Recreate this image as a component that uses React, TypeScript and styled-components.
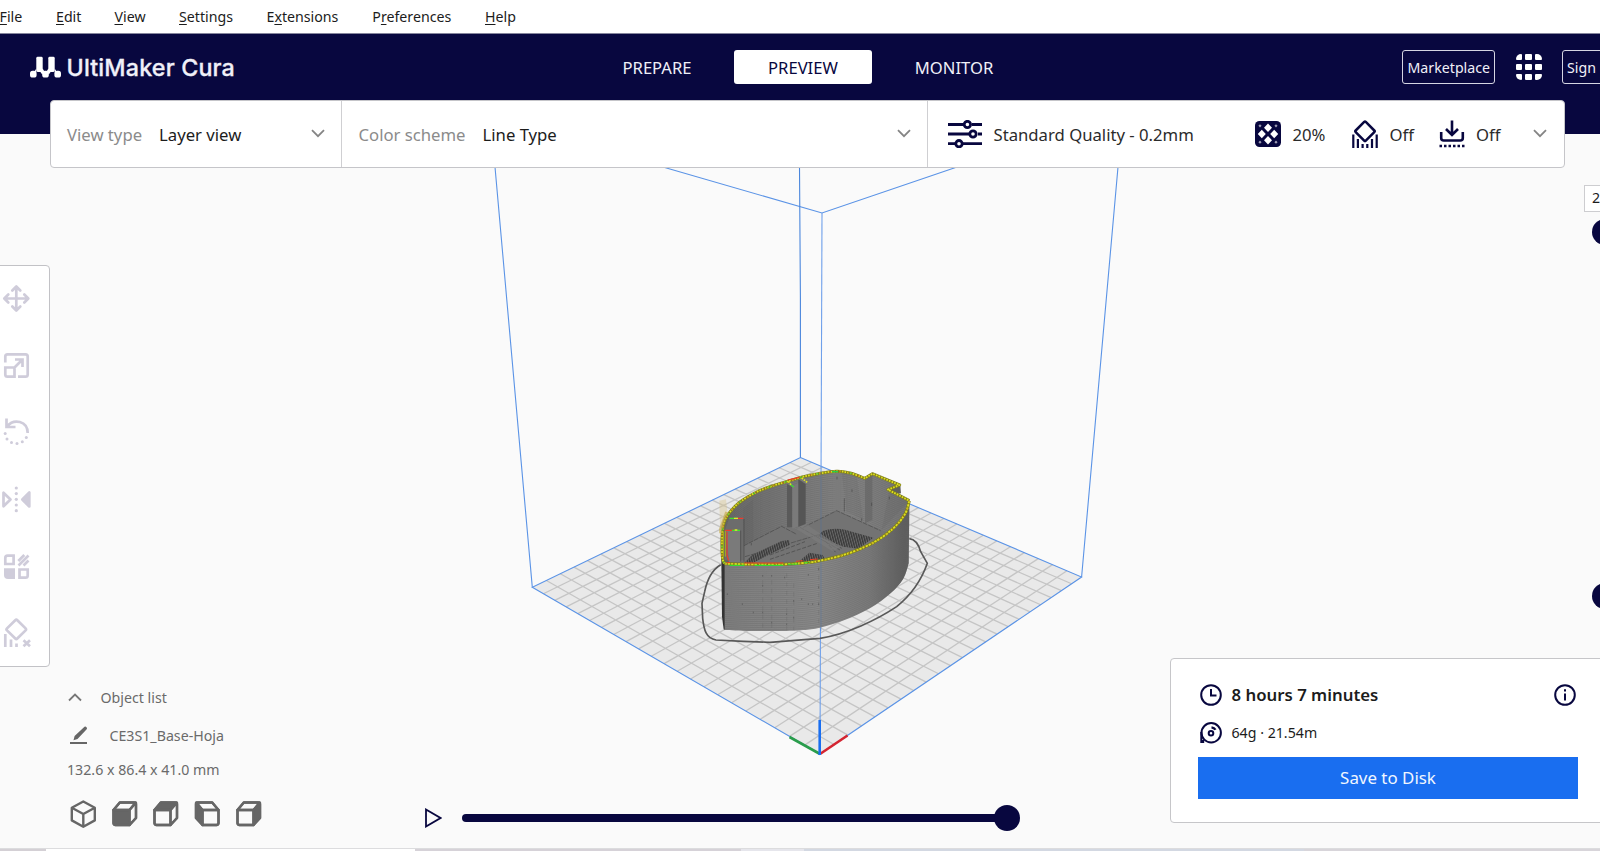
import React from "react";
import styled, { createGlobalStyle, css } from "styled-components";

const navy = "#08073f";
const muted = "#cfccda";
const steel = "#666666";

const GlobalStyle = createGlobalStyle`
  body { margin: 0; background: #fafafa; }
  * { box-sizing: border-box; }
  svg { display: block; flex: none; }
`;

const Window = styled.div`
  width: 1600px;
  height: 851px;
  overflow: hidden;
  display: flex;
  flex-direction: column;
  font-family: "Noto Sans", "Open Sans", sans-serif;
  font-size: 14.2px;
  color: #1c1c1c;
  white-space: nowrap;
`;

const MenuBar = styled.nav`
  flex: none;
  height: 34px;
  margin-left: -0.5px;
  display: grid;
  grid-template-columns: 56.5px 58.5px 64.5px 87.5px 105.8px 112.7px auto;
  align-items: center;
  background: #fff;
  border-bottom: 1px solid #85859c;
`;

const MenuItem = styled.span`
  u {
    text-underline-offset: 2px;
    text-decoration-thickness: 1px;
    text-decoration-skip-ink: none;
  }
`;

const Header = styled.header`
  flex: none;
  height: 100px;
  padding: 16px 0 0 30px;
  display: flex;
  align-items: flex-start;
  background: ${navy};
  color: #f0f0f8;
`;

const Brand = styled.div`
  flex: none;
  width: 560px;
  height: 34px;
  display: flex;
  align-items: center;
  gap: 5.5px;
  font: 500 23.3px/34px Inter, sans-serif;
  letter-spacing: 0.15px;
`;

const BrandName = styled.span`
  padding-top: 2px;
  -webkit-text-stroke: 0.3px currentColor;
`;

const Stages = styled.div`
  flex: none;
  width: 812px;
  display: flex;
  font-size: 16.6px;
`;

const Stage = styled.span<{ $active?: boolean; $width: number }>`
  flex: none;
  width: ${(p) => p.$width}px;
  height: 34px;
  display: flex;
  align-items: center;
  justify-content: center;
  border-radius: 3px;
  ${(p) =>
    p.$active &&
    css`
      margin-left: 10px;
      background: #fff;
      color: ${navy};
    `}
`;

const OutlineButton = styled.button<{ $width: number; $gap?: number }>`
  flex: none;
  width: ${(p) => p.$width}px;
  height: 34px;
  margin-right: ${(p) => p.$gap ?? 0}px;
  padding: 0 0 0 4.5px;
  border: 1.5px solid #d5d5e2;
  border-radius: 3px;
  background: none;
  color: inherit;
  font: inherit;
  text-align: left;
`;

const AppGrid = styled.div`
  flex: none;
  width: 26px;
  height: 26px;
  margin: 4px 20px 0 0;
  display: grid;
  grid-template-columns: repeat(3, 1fr);
  gap: 3.5px;
  overflow: hidden;
  border-radius: 5px;
  i { background: #fff; border-radius: 1px; }
`;

const Workspace = styled.main`
  position: relative;
  flex: none;
  height: 714px;
  display: flex;
  flex-direction: column;
  background: #fafafa;
`;

const SceneLayer = styled.svg`
  position: absolute;
  inset: 0;
`;

const ConfigBar = styled.section`
  position: relative;
  flex: none;
  width: 1515px;
  height: 68px;
  margin: -34px 0 0 50px;
  display: flex;
  background: #fff;
  border: 1px solid #c5c5c9;
  border-radius: 4px;
  font-size: 16.7px;
`;

const ConfigCell = styled.div<{ $width: number; $pad: number }>`
  flex: none;
  width: ${(p) => p.$width}px;
  padding: 0 0 0 ${(p) => p.$pad}px;
  display: flex;
  align-items: center;
  border-right: 1px solid #cfcfd2;
  &:last-child { border-right: 0; }
`;

const Label = styled.span`
  color: #8b8b8b;
  margin-right: 17px;
`;

const Push = styled.span<{ $right: number }>`
  margin: -2px ${(p) => p.$right}px 0 auto;
`;

const Setting = styled.div<{ $width: number }>`
  flex: none;
  width: ${(p) => p.$width}px;
  display: flex;
  align-items: center;
  gap: 11.5px;
  color: #2b2b2b;
`;

const Body = styled.div`
  position: relative;
  flex: 1;
  min-height: 0;
  display: grid;
  grid-template-columns: 425px 745px 434px;
`;

const LeftColumn = styled.div`
  padding-top: 97px;
`;

const ToolPanel = styled.div`
  width: 54px;
  height: 402px;
  margin-left: -4px;
  padding: 15.5px 0 0 3px;
  display: flex;
  flex-direction: column;
  gap: 35px;
  background: #fff;
  border: 1px solid #c2c2c6;
  border-radius: 4px;
`;

const ObjectPanel = styled.div`
  padding: 12px 0 0 67px;
  color: #6a6a6a;
`;

const InfoRow = styled.div<{ $height: number; $gap?: number; $pad?: number }>`
  height: ${(p) => p.$height}px;
  padding-left: ${(p) => p.$pad ?? 0}px;
  display: flex;
  align-items: center;
  gap: ${(p) => p.$gap ?? 0}px;
`;

const CenterColumn = styled.div`
  padding-bottom: 17px;
  display: flex;
  align-items: flex-end;
`;

const PathSlider = styled.div`
  height: 26px;
  display: flex;
  align-items: center;
`;

const Track = styled.div`
  width: 540px;
  height: 8px;
  margin-left: 20px;
  border-radius: 4px;
  background: ${navy};
`;

const Handle = styled.div<{ $overlap?: number }>`
  flex: none;
  width: 26px;
  height: 26px;
  margin-left: ${(p) => p.$overlap ?? 0}px;
  border-radius: 50%;
  background: ${navy};
`;

const RightColumn = styled.div`
  display: flex;
  flex-direction: column;
`;

const LayerSlider = styled.div`
  height: 490px;
  padding: 17px 0 0 414px;
  display: flex;
  flex-direction: column;
`;

const LayerLabel = styled.div`
  flex: none;
  width: 50px;
  height: 27px;
  padding-left: 7px;
  border: 1px solid #cdcdd0;
  background: #fff;
  line-height: 24px;
`;

const LayerTrack = styled.div`
  height: 390px;
  margin: 6.5px 0 0 8px;
  display: flex;
  flex-direction: column;
  justify-content: space-between;
`;

const PrintPanel = styled.section`
  height: 165px;
  padding: 17px 26px 0 28.5px;
  background: #fff;
  border: 1.5px solid #c6c6c9;
  border-radius: 4px;
`;

const PrintRow = styled.div<{ $strong?: boolean }>`
  height: ${(p) => (p.$strong ? 38 : 37)}px;
  display: flex;
  align-items: center;
  gap: 10px;
  ${(p) => p.$strong && "font-size: 16.8px; font-weight: 600;"}
`;

const PrintText = styled.span`
  margin-top: -1px;
`;

const SaveButton = styled.button`
  width: 380px;
  height: 42px;
  margin: 6px 0 0 -1.5px;
  padding: 0 0 2px;
  border: 0;
  background: #196ef0;
  color: #f0f6ff;
  font: 16.9px "Noto Sans", sans-serif;
`;

const Spring = styled.span<{ $end: number }>`
  margin-left: auto;
  padding-right: ${(p) => p.$end}px;
`;

const Taskbar = styled.footer`
  flex: none;
  height: 3px;
  display: flex;
  border-top: 1px solid #dcdcde;
`;

const TaskSegment = styled.div<{ $width: number; $tone: string }>`
  width: ${(p) => p.$width}px;
  background: ${(p) => p.$tone};
`;

/* ---------- icons ---------- */

const Chevron = ({ up }: { up?: boolean }) => (
  <svg width="14" height="9" viewBox="0 0 14 9" fill="none" stroke={up ? "#777" : "#858585"} strokeWidth="1.8">
    <path d={up ? "M1 7.5 7 1.5l6 6" : "M1 1.2 7 7.2l6-6"} />
  </svg>
);

const Logo = () => (
  <svg width="31" height="22" viewBox="0 0 31 22" fill="#fff">
    <rect x="0" y="14.8" width="6.6" height="6.8" rx="2.6" />
    <rect x="12.2" y="14.8" width="6.6" height="6.8" rx="2.6" />
    <rect x="24.400" y="14.8" width="6.6" height="6.8" rx="2.6" />
    <rect x="6.300" y="0.800" width="6.400" height="15.200" rx="1.400" />
    <rect x="18.300" y="0.800" width="6.400" height="15.200" rx="1.400" />
    <path d="M6.300 12.500V16L5 17 4.500 15.500zM12.700 12.500l1.500 2.800-2 3.200-2-2.700zM18.300 12.500l-1.500 2.800 2 3.200 2-2.700zM24.700 12.500V16L26 17l.5-1.500z" />
  </svg>
);

const SlidersIcon = () => (
  <svg width="34" height="28" viewBox="0 0 34 28" fill="none" stroke={navy} strokeWidth="2.8">
    <path d="M0 4.5h16M24 4.5h10M0 14h21M30 14h4M0 23.7h7M15 23.7h19" />
    <circle cx="19.4" cy="4.5" r="3.2" />
    <circle cx="25" cy="14" r="3.2" />
    <circle cx="11" cy="23.7" r="3.2" />
  </svg>
);

const InfillIcon = () => (
  <svg width="26" height="26" viewBox="0 0 26 26">
    <rect width="26" height="26" rx="4.5" fill={navy} />
    <g fill="#fff">
      <path d="M13 2.5 17 6.7 13 11 9 6.700zM13 15l4 4.300-4 4.200-4-4.200zM6.800 8.800l4 4.200-4 4.200-4-4.200zM19.200 8.800l4 4.200-4 4.200-4-4.200z" />
      <path d="M5 3.200l1.600 1.600L5 6.400 3.400 4.800zM21 3.200l1.600 1.600L21 6.400l-1.600-1.600zM5 19.600l1.600 1.600L5 22.800l-1.600-1.600zM21 19.600l1.600 1.600-1.600 1.600-1.600-1.600z" opacity=".6" />
    </g>
  </svg>
);

const SupportIcon = () => (
  <svg width="26" height="28" viewBox="0 0 26 28" fill="none" stroke={navy} strokeWidth="2.5">
    <path d="M12.200 1.900q.8-.8 1.600 0l8.500 8.600q.8.8 0 1.600l-8.500 8.500q-.8.8-1.600 0L3.700 12.100q-.8-.8 0-1.600z" />
    <path d="M1.300 14.500V28M5.900 19V28M10.600 24V28M15.300 24V28M20 19V28M24.700 14.500V28" strokeWidth="2.200" />
  </svg>
);

const AdhesionIcon = () => (
  <svg width="26" height="28" viewBox="0 0 26 28" fill="none" stroke={navy} strokeWidth="2.6">
    <path d="M13 .5v14M7 9l6 6 6-6M2.200 12v6q0 2.500 2.500 2.500h16.600q2.500 0 2.500-2.500v-6" />
    <path d="M.5 26h25" strokeDasharray="2.500 2" strokeWidth="2.500" />
  </svg>
);

const toolProps = {
  width: 32,
  height: 32,
  viewBox: "0 0 32 32",
  fill: "none",
  stroke: muted,
  strokeWidth: 2.7,
} as const;

const MoveIcon = () => (
  <svg {...toolProps} strokeLinecap="round" strokeLinejoin="round">
    <path d="M16.300 5v23M4.800 16.500h23M12.300 8.500l4-4 4 4M12.300 24.500l4 4 4-4M8.300 12.500l-4 4 4 4M24.300 12.500l4 4-4 4" />
  </svg>
);

const ScaleIcon = () => (
  <svg {...toolProps}>
    <path d="M5.300 13.500V7.500q0-2.200 2.200-2.200h18q2.200 0 2.200 2.200v18q0 2.200-2.200 2.200H18M5.300 18.500h9.200v9.200H7.500q-2.200 0-2.200-2.200zM14.500 18.500l8-8M15 10.500h7.500V18" />
  </svg>
);

const RotateIcon = () => (
  <svg {...toolProps}>
    <path d="M6.500 2.500v8.500h9M7 10.500C14 2 27.500 5 27.700 17" />
    <g fill={muted} stroke="none">
      <circle cx="5.200" cy="17.500" r="1.500" />
      <circle cx="7" cy="23" r="1.500" />
      <circle cx="11.500" cy="26.500" r="1.500" />
      <circle cx="17" cy="27.500" r="1.500" />
      <circle cx="22.300" cy="25.800" r="1.500" />
      <circle cx="26.300" cy="21.600" r="1.500" />
    </g>
  </svg>
);

const MirrorIcon = () => (
  <svg {...toolProps} strokeLinejoin="round">
    <path d="M3.500 9.700v13.600l7-6.800z" />
    <path d="M29.300 9.500v14l-7-7z" fill={muted} />
    <g fill={muted} stroke="none">
      {[5, 10.6, 16.3, 22, 27.7].map((y) => (
        <circle key={y} cx="16.300" cy={y} r="1.600" />
      ))}
    </g>
  </svg>
);

const MeshIcon = () => (
  <svg {...toolProps}>
    <path d="M5.300 14V8q0-2.300 2.300-2.300h6V14zM19.500 19.500h8.200v6q0 2.200-2.200 2.200h-6z" />
    <path d="M4 18.200h11V29H8q-4 0-4-4z" fill={muted} stroke="none" />
    <path d="M18.300 11l6-6M18.500 15.500 28.500 5.500M23.500 15.500l5-5" />
  </svg>
);

const BlockerIcon = () => (
  <svg {...toolProps}>
    <path d="M15.300 3.200q1-1 2 0l8.300 8.200q1 1 0 2l-8.300 8.100q-1 1-2 0L7 13.400q-1-1 0-2z" />
    <path d="M5.300 17v13M11 22.500v7.500M16.500 26.500v3.500M23.500 23.200l6.500 6M30 23.200l-6.500 6" />
  </svg>
);

const PencilIcon = () => (
  <svg width="19" height="19" viewBox="0 0 19 19" fill={steel}>
    <path d="M15.500.8q1-.7 2 .4t.2 2L8.500 13l-4 1.200L5.600 10zM1 16h17v2H1z" />
  </svg>
);

type Face = "front" | "top" | "left" | "right";

const CubeIcon = () => (
  <svg width="28" height="30" viewBox="0.7 0 28 30" fill="none" stroke={steel} strokeWidth="2.400" strokeLinejoin="round">
    <path d="M14 2.500 25.500 8.800v12.600L14 27.800 2.500 21.400V8.800zM2.500 8.800 14 15l11.500-6.200M14 15v12.800" />
  </svg>
);

const FaceIcon = ({ face }: { face: Face }) => (
  <svg width="28" height="30" viewBox="0 0 28 30" fill="none" stroke={steel} strokeWidth="2.400" strokeLinejoin="round">
    <g transform={face === "left" ? "matrix(-1 0 0 1 28 0)" : undefined}>
      <path d="M2.500 11 8.800 3.500H23q2 0 2 2v13.500l-6.500 7H4.500q-2 0-2-2z" />
      <path d="M2.500 11h16v15h-14q-2 0-2-2z" fill={face === "front" ? steel : "none"} />
      <path d="M2.500 11 8.800 3.500h15.700l-6 7.500z" fill={face === "top" ? steel : "none"} />
      <path d="M18.500 11 25 3.800V19l-6.500 7z" fill={face === "left" || face === "right" ? steel : "none"} />
    </g>
  </svg>
);

const ClockIcon = () => (
  <svg width="22" height="22" viewBox="0 0 22 22" fill="none" stroke={navy} strokeWidth="2">
    <circle cx="11" cy="11" r="9.800" />
    <path d="M11 5v6.500h5.500" />
  </svg>
);

const SpoolIcon = () => (
  <svg width="22" height="22" viewBox="0 0 22 22" fill="none" stroke={navy} strokeWidth="2">
    <circle cx="11.200" cy="10.800" r="9.700" />
    <path d="M1.300 10v11M3.200 18v3" />
    <circle cx="11" cy="11.200" r="2.300" />
    <path d="M11.500 5.300q2.800.4 4 2.500" strokeWidth="2.300" />
  </svg>
);

const InfoIcon = () => (
  <svg width="22" height="22" viewBox="0 0 22 22" fill="none" stroke={navy} strokeWidth="2">
    <circle cx="11" cy="11" r="9.800" />
    <path d="M11 9.500v7M11 5.300v2.300" />
  </svg>
);

/* ---------- build plate and sliced model ---------- */

type Point = [number, number];

const back: Point = [800.4, 457.5];
const left: Point = [532.3, 587.3];
const right: Point = [1081.6, 577];
const front: Point = [820, 754];

/* Perspective map of the unit square onto the plate; (0,0) is the front corner. */
const onPlate = (u: number, v: number): Point => {
  const [x0, y0] = front;
  const [x1, y1] = right;
  const [x2, y2] = back;
  const [x3, y3] = left;
  const dx1 = x1 - x2, dx2 = x3 - x2, sx = x0 - x1 + x2 - x3;
  const dy1 = y1 - y2, dy2 = y3 - y2, sy = y0 - y1 + y2 - y3;
  const den = dx1 * dy2 - dx2 * dy1;
  const g = (sx * dy2 - dx2 * sy) / den;
  const h = (dx1 * sy - sx * dy1) / den;
  const w = g * u + h * v + 1;
  return [
    ((x1 - x0 + g * x1) * u + (x3 - x0 + h * x3) * v + x0) / w,
    ((y1 - y0 + g * y1) * u + (y3 - y0 + h * y3) * v + y0) / w,
  ];
};

const segment = (a: Point, b: Point) => `M${a[0].toFixed(2)} ${a[1].toFixed(2)}L${b[0].toFixed(2)} ${b[1].toFixed(2)}`;

const CELLS = 22;
const gridPath = Array.from({ length: CELLS - 1 }, (_, i) => (i + 1) / CELLS)
  .map((t) => segment(onPlate(t, 0), onPlate(t, 1)) + segment(onPlate(0, t), onPlate(1, t)))
  .join("");

const smooth = (pts: Point[]) => {
  let d = `M${pts[0][0]} ${pts[0][1]}`;
  for (let i = 0; i < pts.length - 1; i++) {
    const p0 = pts[i - 1] ?? pts[i];
    const p1 = pts[i];
    const p2 = pts[i + 1];
    const p3 = pts[i + 2] ?? p2;
    const c = [
      p1[0] + (p2[0] - p0[0]) / 6, p1[1] + (p2[1] - p0[1]) / 6,
      p2[0] - (p3[0] - p1[0]) / 6, p2[1] - (p3[1] - p1[1]) / 6,
      p2[0], p2[1],
    ].map((n) => n.toFixed(1));
    d += `C${c.join(" ")}`;
  }
  return d;
};

const wallTop: Point[] = [[104, 371], [180, 373], [280, 373], [340, 369], [390, 362], [470, 342], [550, 308], [610, 265], [645, 222], [658, 182]];
const wallBottom: Point[] = [[104, 570], [180, 573], [280, 573], [340, 570], [390, 563], [462, 541], [540, 505], [602, 460], [640, 416], [656, 370]];

const wallLayer = (t: number) =>
  smooth(wallTop.map((p, i): Point => [p[0] + (wallBottom[i][0] - p[0]) * t, p[1] + (wallBottom[i][1] - p[1]) * t]));

const backRim: Point[] = [[104, 371], [97, 350], [97, 275], [104, 242], [120, 216], [150, 186], [200, 156], [250, 137], [300, 122], [340, 110], [385, 101], [440, 94], [480, 99], [525, 115]];
const backRimPath = smooth(backRim);
const notch = "L547 101L629 135L594 149L658 182";
const frontRimPath = smooth(wallTop);
const wallReturn = smooth([...wallTop].reverse()).replace("M", "L");

const outerWall = `${frontRimPath}L656 370${smooth([...wallBottom].reverse()).replace("M", "L")}Z`;
const interior = `${backRimPath}${notch}${wallReturn}Z`;

const layers = Array.from({ length: 33 }, (_, i) => wallLayer((i + 0.7) / 33.5)).join("");
const innerLayers = Array.from({ length: 40 }, (_, i) => {
  const y = 8 + i * 6;
  return smooth(backRim.slice(3).map((p): Point => [p[0], p[1] + y])) + `L547 ${101 + y}L660 ${150 + y}`;
}).join("");

const seams: Point[] = [
  [218, 405], [245, 405], [284, 410], [355, 402], [386, 385], [157, 490], [190, 515], [218, 515], [245, 545], [290, 520],
  [311, 480], [355, 490], [386, 440], [368, 490], [112, 460], [290, 550], [335, 475], [386, 490], [311, 530], [218, 435],
];

const Model = () => (
  <g transform="translate(690 440) scale(.33333)" fill="none" strokeLinejoin="round">
    <path
      d="M92 374C62 392 50 425 44 455L36 490L38 535C42 570 48 595 78 600L160 604L240 607L390 595C470 583 560 540 620 500C670 460 698 410 712 370L692 335C685 310 675 298 658 296"
      stroke="#585858" strokeWidth="5"
    />
    <path d="M88 182L108 178L113 218L98 262L90 262Z" fill="#d8c48a" opacity=".4" />
    <path d="M592 149L631 136L633 160L618 163Z" fill="#606060" />
    <path d="M93 270L106 372L106 570L101 568L96 530Z" fill="#333" />
    <path d={interior} fill="url(#inner)" />
    <g clipPath="url(#cavity)">
      <path d={innerLayers} stroke="#505050" strokeWidth="1.500" opacity=".4" />
      <path d="M160 318L275 259L330 270L440 212L572 272L640 290L500 400L100 400Z" fill="#737373" />
      <path d="M160 318L275 259L320 283M340 262L440 212L572 272M330 262L450 330M165 350L400 280" stroke="#484848" strokeWidth="2" strokeDasharray="15 3" />
      <path d="M186 345L275 303L297 300L300 314L235 345L190 368L160 372Z" fill="url(#hatch)" />
      <path d="M320 370L358 338L398 345L405 358Z" fill="url(#hatch)" />
      <path d="M384 289L398 273Q430 262 465 269L550 293L505 326L460 320Z" fill="url(#hatch)" />
      <path d="M240 358L385 309M240 345L345 305M405 303L440 340M420 305L455 325" stroke="#454545" strokeWidth="2" strokeDasharray="12 5" />
      <path d="M320 268L345 250L450 320L430 335Z" fill="#7c7c7c" opacity=".65" />
      <path d="M291 132L307 142V262H291Z" fill="#5a5a5a" />
      <path d="M307 140L326 128V258L307 266Z" fill="#7a7a7a" />
      <path d="M325 118L347 132V252L325 260Z" fill="#555" />
      <path d="M525 115L547 101V240L525 250Z" fill="#626262" opacity=".6" />
      <path d="M188 180L160 205V315L190 300ZM455 98L500 108L520 240L470 215ZM598 150L655 185L575 270Z" fill="#505050" opacity=".12" />
      <path d="M118 235H160L162 360H105V270Z" fill="#6c6c6c" />
      <path d="M109 272H150V366H117Z" fill="#7a7a7a" />
      <path d="M152 272V365M162 237V365" stroke="#484848" strokeWidth="2" />
      <path d="M463 175V215M486 148V156M545 188V198M515 235V243M184 309V316M441 110V118M598 170V178" stroke="#383838" strokeWidth="1.500" />
    </g>
    <path d={outerWall} fill="url(#outer)" />
    <path d={layers} stroke="#666" strokeWidth="2" opacity=".5" />
    <path d={seams.map(([x, y]) => `M${x} ${y}v5`).join("")} stroke="#444" strokeWidth="1.500" />
    <path d="M218 420V570M245 420V570M290 400V572M311 430V570M386 380V560" stroke="#4d4d4d" strokeWidth="1" strokeDasharray="14 12" opacity=".45" />

    <path d={`${backRimPath}${notch}`} stroke="#7e7e1c" strokeWidth="9" />
    <path d={frontRimPath} stroke="#7e7e1c" strokeWidth="9" />
    <path d={`${backRimPath}${notch}`} stroke="#dede1e" strokeWidth="5.500" strokeDasharray="5 3.500" />
    <path d={frontRimPath} stroke="#dede1e" strokeWidth="5.500" strokeDasharray="7 3" />
    <path d="M106 272V350M100 275V350" stroke="#a8b41a" strokeWidth="3" />
    <path d={backRimPath} stroke="#bb5b1c" strokeWidth="3" strokeDasharray="5 24" strokeDashoffset="4" />
    <path d={backRimPath} stroke="#37c837" strokeWidth="3" strokeDasharray="8 42" />
    <path d="M110 368H120M163 369H280M318 364L338 362M360 359L383 357" stroke="#ef3f20" strokeWidth="3" />
    <path d="M118 376H163M194 376H280M294 373L325 372M342 369L360 367" stroke="#35d82f" strokeWidth="3.500" />
    <path d={frontRimPath} stroke="#9c3b1c" strokeWidth="2.500" strokeDasharray="3 22" />
    <path d="M293 120L328 112M142 235H160M106 271H134M111 275V345L116 362" stroke="#ef3b2d" strokeWidth="3.500" />
    <path d="M118 235H143M126 271H150M300 132L311 141" stroke="#3be02f" strokeWidth="4" />
    <path d="M132 235H144M134 270H142" stroke="#e8e32a" strokeWidth="4" />
    <path d="M295 124L303 134M335 114L353 128" stroke="#dfe321" strokeWidth="5" strokeDasharray="5 3" />
    <path d="M426 95H444" stroke="#24d14b" strokeWidth="4" />
    <path d="M110 216L92 266L92 280" stroke="#c6aa4c" strokeWidth="9" opacity=".65" />
  </g>
);

const Scene = () => (
  <SceneLayer width="1600" height="714" viewBox="0 134 1600 714" fill="none">
    <defs>
      <linearGradient id="outer" x1="0" x2="1">
        <stop offset="0" stopColor="#7e7e7e" />
        <stop offset=".5" stopColor="#898989" />
        <stop offset=".78" stopColor="#7a7a7a" />
        <stop offset="1" stopColor="#585858" />
      </linearGradient>
      <linearGradient id="inner" x1="0" x2="1">
        <stop offset="0" stopColor="#686868" />
        <stop offset=".35" stopColor="#787878" />
        <stop offset=".7" stopColor="#838383" />
        <stop offset="1" stopColor="#757575" />
      </linearGradient>
      <pattern id="hatch" width="7" height="7" patternUnits="userSpaceOnUse" patternTransform="rotate(-15)">
        <rect width="7" height="7" fill="#6a6a6a" />
        <rect width="4" height="7" fill="#393939" />
      </pattern>
      <clipPath id="cavity">
        <path d={interior} />
      </clipPath>
    </defs>
    <path d={`M${back}L${right}L${front}L${left}Z`} fill="#e9e9e9" />
    <path d={gridPath} stroke="#c5c5c5" strokeWidth="1.300" />
    <g stroke="#5a93e6" strokeWidth="1.100">
      <path d={`M${back}L${right}L${front}L${left}Z`} />
      <path d="M532.300 587.300L495 167M1081.600 577L1118 167M663 167L822 213L960 166" />
      <path d="M822 213L820 754" stroke="#6fa0ea" />
      <path d="M800.400 457.500V298L799.500 167" stroke="#4a86dc" />
    </g>
    <Model />
    <path d="M821 472V631" stroke="#3f6fb0" strokeWidth="1" opacity=".35" />
    <path d="M820 754L789.500 737" stroke="#2a9d4c" strokeWidth="2.600" />
    <path d="M820 754L847.500 735.500" stroke="#d52531" strokeWidth="2.600" />
    <path d="M819.700 755V720" stroke="#196ef0" strokeWidth="2.600" />
  </SceneLayer>
);

const menus: [string, string, string][] = [
  ["", "F", "ile"],
  ["", "E", "dit"],
  ["", "V", "iew"],
  ["", "S", "ettings"],
  ["E", "x", "tensions"],
  ["P", "r", "eferences"],
  ["", "H", "elp"],
];

export default function App() {
  return (
    <Window>
      <GlobalStyle />
      <MenuBar>
        {menus.map(([pre, key, post]) => (
          <MenuItem key={pre + key + post}>
            {pre}
            <u>{key}</u>
            {post}
          </MenuItem>
        ))}
      </MenuBar>
      <Header>
        <Brand>
          <Logo />
          <BrandName>UltiMaker Cura</BrandName>
        </Brand>
        <Stages>
          <Stage $width={134}>PREPARE</Stage>
          <Stage $width={138} $active>PREVIEW</Stage>
          <Stage $width={164}>MONITOR</Stage>
        </Stages>
        <OutlineButton $width={93} $gap={20.5}>Marketplace</OutlineButton>
        <AppGrid>
          {Array.from({ length: 9 }, (_, i) => <i key={i} />)}
        </AppGrid>
        <OutlineButton $width={60}>Sign</OutlineButton>
      </Header>
      <Workspace>
        <Scene />
        <ConfigBar>
          <ConfigCell $width={291} $pad={16}>
            <Label>View type</Label>Layer view
            <Push $right={16}><Chevron /></Push>
          </ConfigCell>
          <ConfigCell $width={586} $pad={16.5}>
            <Label>Color scheme</Label>Line Type
            <Push $right={16.5}><Chevron /></Push>
          </ConfigCell>
          <ConfigCell $width={636} $pad={20}>
            <Setting $width={307}><SlidersIcon />Standard Quality - 0.2mm</Setting>
            <Setting $width={97}><InfillIcon />20%</Setting>
            <Setting $width={86.5}><SupportIcon />Off</Setting>
            <Setting $width={80}><AdhesionIcon />Off</Setting>
            <Push $right={17.5}><Chevron /></Push>
          </ConfigCell>
        </ConfigBar>
        <Body>
          <LeftColumn>
            <ToolPanel>
              <MoveIcon />
              <ScaleIcon />
              <RotateIcon />
              <MirrorIcon />
              <MeshIcon />
              <BlockerIcon />
            </ToolPanel>
            <ObjectPanel>
              <InfoRow $height={36} $gap={18.5} $pad={1}><Chevron up />Object list</InfoRow>
              <InfoRow $height={40} $gap={22} $pad={1.5}><PencilIcon />CE3S1_Base-Hoja</InfoRow>
              <InfoRow $height={28}>132.6 x 86.4 x 41.0 mm</InfoRow>
              <InfoRow $height={61} $gap={13.3} $pad={2.5}>
                <CubeIcon />
                <FaceIcon face="front" />
                <FaceIcon face="top" />
                <FaceIcon face="left" />
                <FaceIcon face="right" />
              </InfoRow>
            </ObjectPanel>
          </LeftColumn>
          <CenterColumn>
            <PathSlider>
              <svg width="17" height="20" viewBox="0 0 17 20" fill="none" stroke={navy} strokeWidth="1.800">
                <path d="M1 1.500 15.500 10 1 18.500z" />
              </svg>
              <Track />
              <Handle $overlap={-8} />
            </PathSlider>
          </CenterColumn>
          <RightColumn>
            <LayerSlider>
              <LayerLabel>2</LayerLabel>
              <LayerTrack>
                <Handle />
                <Handle />
              </LayerTrack>
            </LayerSlider>
            <PrintPanel>
              <PrintRow $strong>
                <ClockIcon />
                <PrintText>8 hours 7 minutes</PrintText>
                <Spring $end={1}><InfoIcon /></Spring>
              </PrintRow>
              <PrintRow>
                <SpoolIcon />
                <PrintText>64g · 21.54m</PrintText>
              </PrintRow>
              <SaveButton>Save to Disk</SaveButton>
            </PrintPanel>
          </RightColumn>
        </Body>
      </Workspace>
      <Taskbar>
        <TaskSegment $width={46} $tone="#d4d0d5" />
        <TaskSegment $width={369} $tone="#ffffff" />
        <TaskSegment $width={326} $tone="#d6d2d8" />
        <TaskSegment $width={63} $tone="#e6e6ec" />
        <TaskSegment $width={500} $tone="#d3d8e2" />
        <TaskSegment $width={296} $tone="#d8d5da" />
      </Taskbar>
    </Window>
  );
}
